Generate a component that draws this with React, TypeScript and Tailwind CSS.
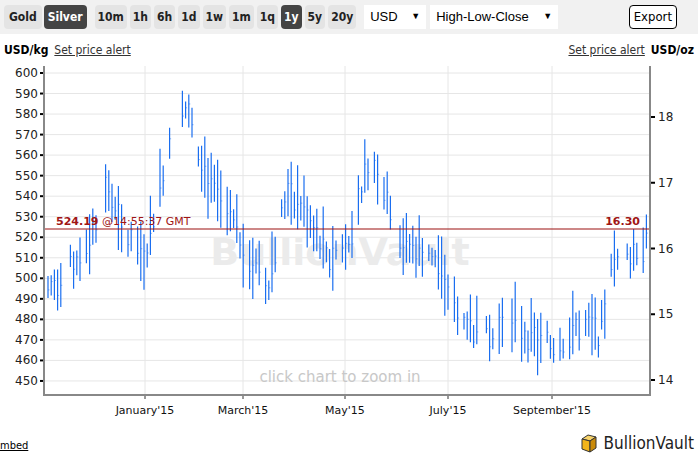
import React from "react";

const KEYS: [number, number][] = [
  [48, 495], [70, 505], [90, 520], [108, 545], [120, 522], [145, 512], [160, 545], [172, 575],
  [182, 588], [195, 570], [210, 545], [230, 530], [255, 505], [268, 498], [288, 545], [310, 530],
  [330, 510], [348, 520], [370, 560], [385, 545], [405, 515], [430, 515], [450, 492], [470, 478],
  [490, 470], [515, 478], [540, 468], [560, 468], [580, 478], [600, 472], [612, 505], [630, 512], [648, 518],
];

const py = (p: number) => 73 + (600 - p) * 2.053;

function priceAt(x: number) {
  for (let i = 0; i < KEYS.length - 1; i++) {
    const [x0, p0] = KEYS[i];
    const [x1, p1] = KEYS[i + 1];
    if (x >= x0 && x <= x1) return p0 + ((p1 - p0) * (x - x0)) / (x1 - x0);
  }
  return 518;
}

let seed = 7;
const rnd = () => {
  seed = (seed * 9301 + 49297) % 233280;
  return seed / 233280;
};

const bars: { x: number; hi: number; lo: number; c: number }[] = [];
for (let x = 48; x <= 648; x += 3.2) {
  if (rnd() < 0.2) continue;
  const m = priceAt(x) + (rnd() - 0.5) * 12;
  const r = 4 + rnd() * 12;
  bars.push({ x, hi: m + r, lo: m - r, c: m + (rnd() - 0.5) * r });
}

const months = [
  { x: 145, t: "January'15" },
  { x: 243, t: "March'15" },
  { x: 345, t: "May'15" },
  { x: 448, t: "July'15" },
  { x: 552, t: "September'15" },
];

function Chart() {
  const left = [];
  for (let p = 450; p <= 600; p += 10) left.push(p);
  return (
    <svg width="698" height="380" viewBox="0 60 698 380" className="block" style={{ fontFamily: "'DejaVu Sans', sans-serif" }}>
      <rect x="44" y="66" width="606" height="329" fill="#fff" />
      {left.map((p) => (
        <g key={p}>
          <line x1="44" x2="650" y1={py(p)} y2={py(p)} stroke="#e6e6e6" />
          <line x1="40" x2="44" y1={py(p)} y2={py(p)} stroke="#000" strokeWidth="2" />
          <text x="38" y={py(p) + 4} fontSize="12" textAnchor="end" fill="#222">{p}</text>
        </g>
      ))}
      {months.map((m) => (
        <g key={m.t}>
          <line x1={m.x} x2={m.x} y1="66" y2="395" stroke="#e6e6e6" />
          <line x1={m.x} x2={m.x} y1="395" y2="399" stroke="#333" />
          <text x={m.x} y="414" fontSize="11" textAnchor="middle" fill="#111">{m.t}</text>
        </g>
      ))}
      {[14, 15, 16, 17, 18].map((v) => {
        const y = 380 - (v - 14) * 65.75;
        return (
          <g key={v}>
            <line x1="650" x2="655" y1={y} y2={y} stroke="#000" strokeWidth="2" />
            <text x="658" y={y + 4} fontSize="12" fill="#222">{v}</text>
          </g>
        );
      })}
      <text x="340" y="265" fontSize="38" fontWeight="bold" textAnchor="middle" fill="#ebebeb">BullionVault</text>
      <text x="340" y="382" fontSize="15" textAnchor="middle" fill="#c8c8c8">click chart to zoom in</text>
      {bars.map((b, i) => (
        <g key={i} stroke="#1a6ef0">
          <line x1={b.x} x2={b.x} y1={py(b.hi)} y2={py(b.lo)} strokeWidth="1.2" />
          <line x1={b.x} x2={b.x + 1.5} y1={py(b.c)} y2={py(b.c)} strokeWidth="1" opacity="0.5" />
        </g>
      ))}
      <line x1="44" x2="650" y1="229" y2="229" stroke="#9b1010" strokeWidth="1.2" />
      <text x="56" y="225" fontSize="11" fill="#a01515">
        <tspan fontWeight="bold">524.19</tspan> @14:55:37 GMT
      </text>
      <text x="640" y="225" fontSize="11" fontWeight="bold" fill="#a01515" textAnchor="end">16.30</text>
      <line x1="44" x2="44" y1="66" y2="396" stroke="#888" strokeWidth="2" />
      <line x1="650" x2="650" y1="66" y2="396" stroke="#888" strokeWidth="2" />
      <line x1="44" x2="650" y1="395" y2="395" stroke="#888" strokeWidth="2" />
    </svg>
  );
}

const periods = ["10m", "1h", "6h", "1d", "1w", "1m", "1q", "1y", "5y", "20y"];

export default function App() {
  return (
    <div className="w-[698px] h-[460px] overflow-hidden bg-white relative" style={{ fontFamily: "'Liberation Sans', Arial, sans-serif" }}>
      <div className="h-[34px] bg-[#f1f1f1] flex items-center px-[4px] text-[12px] font-bold" style={{ fontFamily: "'DejaVu Sans Condensed', 'DejaVu Sans', sans-serif" }}>
        <div className="px-[5px] h-[24px] flex items-center bg-[#e4e4e4] rounded-sm text-[#222]">Gold</div>
        <div className="ml-[2px] px-[4px] h-[24px] flex items-center bg-[#444] rounded-sm text-white">Silver</div>
        <div className="flex ml-[8px] gap-[3px]">
          {periods.map((p) => (
            <div key={p} className={"px-[3px] h-[24px] flex items-center rounded-sm " + (p === "1y" ? "bg-[#444] text-white" : "bg-[#e4e4e4] text-[#222]")}>{p}</div>
          ))}
        </div>
        <div className="ml-[8px] w-[62px] h-[24px] bg-white flex items-center justify-between px-[6px] font-normal text-[13px]" style={{ fontFamily: "'Liberation Sans', Arial, sans-serif" }}>
          <span>USD</span><span className="text-[9px]">▼</span>
        </div>
        <div className="ml-[4px] w-[128px] h-[24px] bg-white flex items-center justify-between px-[6px] font-normal text-[13px]" style={{ fontFamily: "'Liberation Sans', Arial, sans-serif" }}>
          <span>High-Low-Close</span><span className="text-[9px]">▼</span>
        </div>
        <div className="ml-auto mr-[17px] px-[4px] h-[24px] flex items-center border border-black rounded-sm bg-white text-[13px] font-normal">Export</div>
      </div>
      <div className="flex items-center justify-between px-[4px] h-[32px] text-[12px]" style={{ fontFamily: "'DejaVu Sans Condensed', 'DejaVu Sans', sans-serif" }}>
        <div className="flex gap-[6px]"><b>USD/kg</b><span className="underline text-[#333]">Set price alert</span></div>
        <div className="flex gap-[6px]"><span className="underline text-[#333]">Set price alert</span><b>USD/oz</b></div>
      </div>
      <div className="-mt-[6px]"><Chart /></div>
      <div className="absolute left-0 bottom-[6px] text-[11px] underline" style={{ fontFamily: "'DejaVu Sans Condensed', sans-serif" }}>mbed</div>
      <div className="absolute right-[4px] bottom-[4px] flex items-center gap-[4px]">
        <svg width="22" height="22" viewBox="0 0 22 22">
          <path d="M4 7 L10 3 L18 5 L12 9 Z" fill="#f7d36a" stroke="#333" />
          <path d="M4 7 L12 9 L12 20 L4 17 Z" fill="#f2b41a" stroke="#333" />
          <path d="M12 9 L18 5 L18 16 L12 20 Z" fill="#c98a0a" stroke="#333" />
        </svg>
        <span className="text-[17px] text-[#222]" style={{ fontFamily: "'DejaVu Sans Condensed', sans-serif" }}>BullionVault</span>
      </div>
    </div>
  );
}
